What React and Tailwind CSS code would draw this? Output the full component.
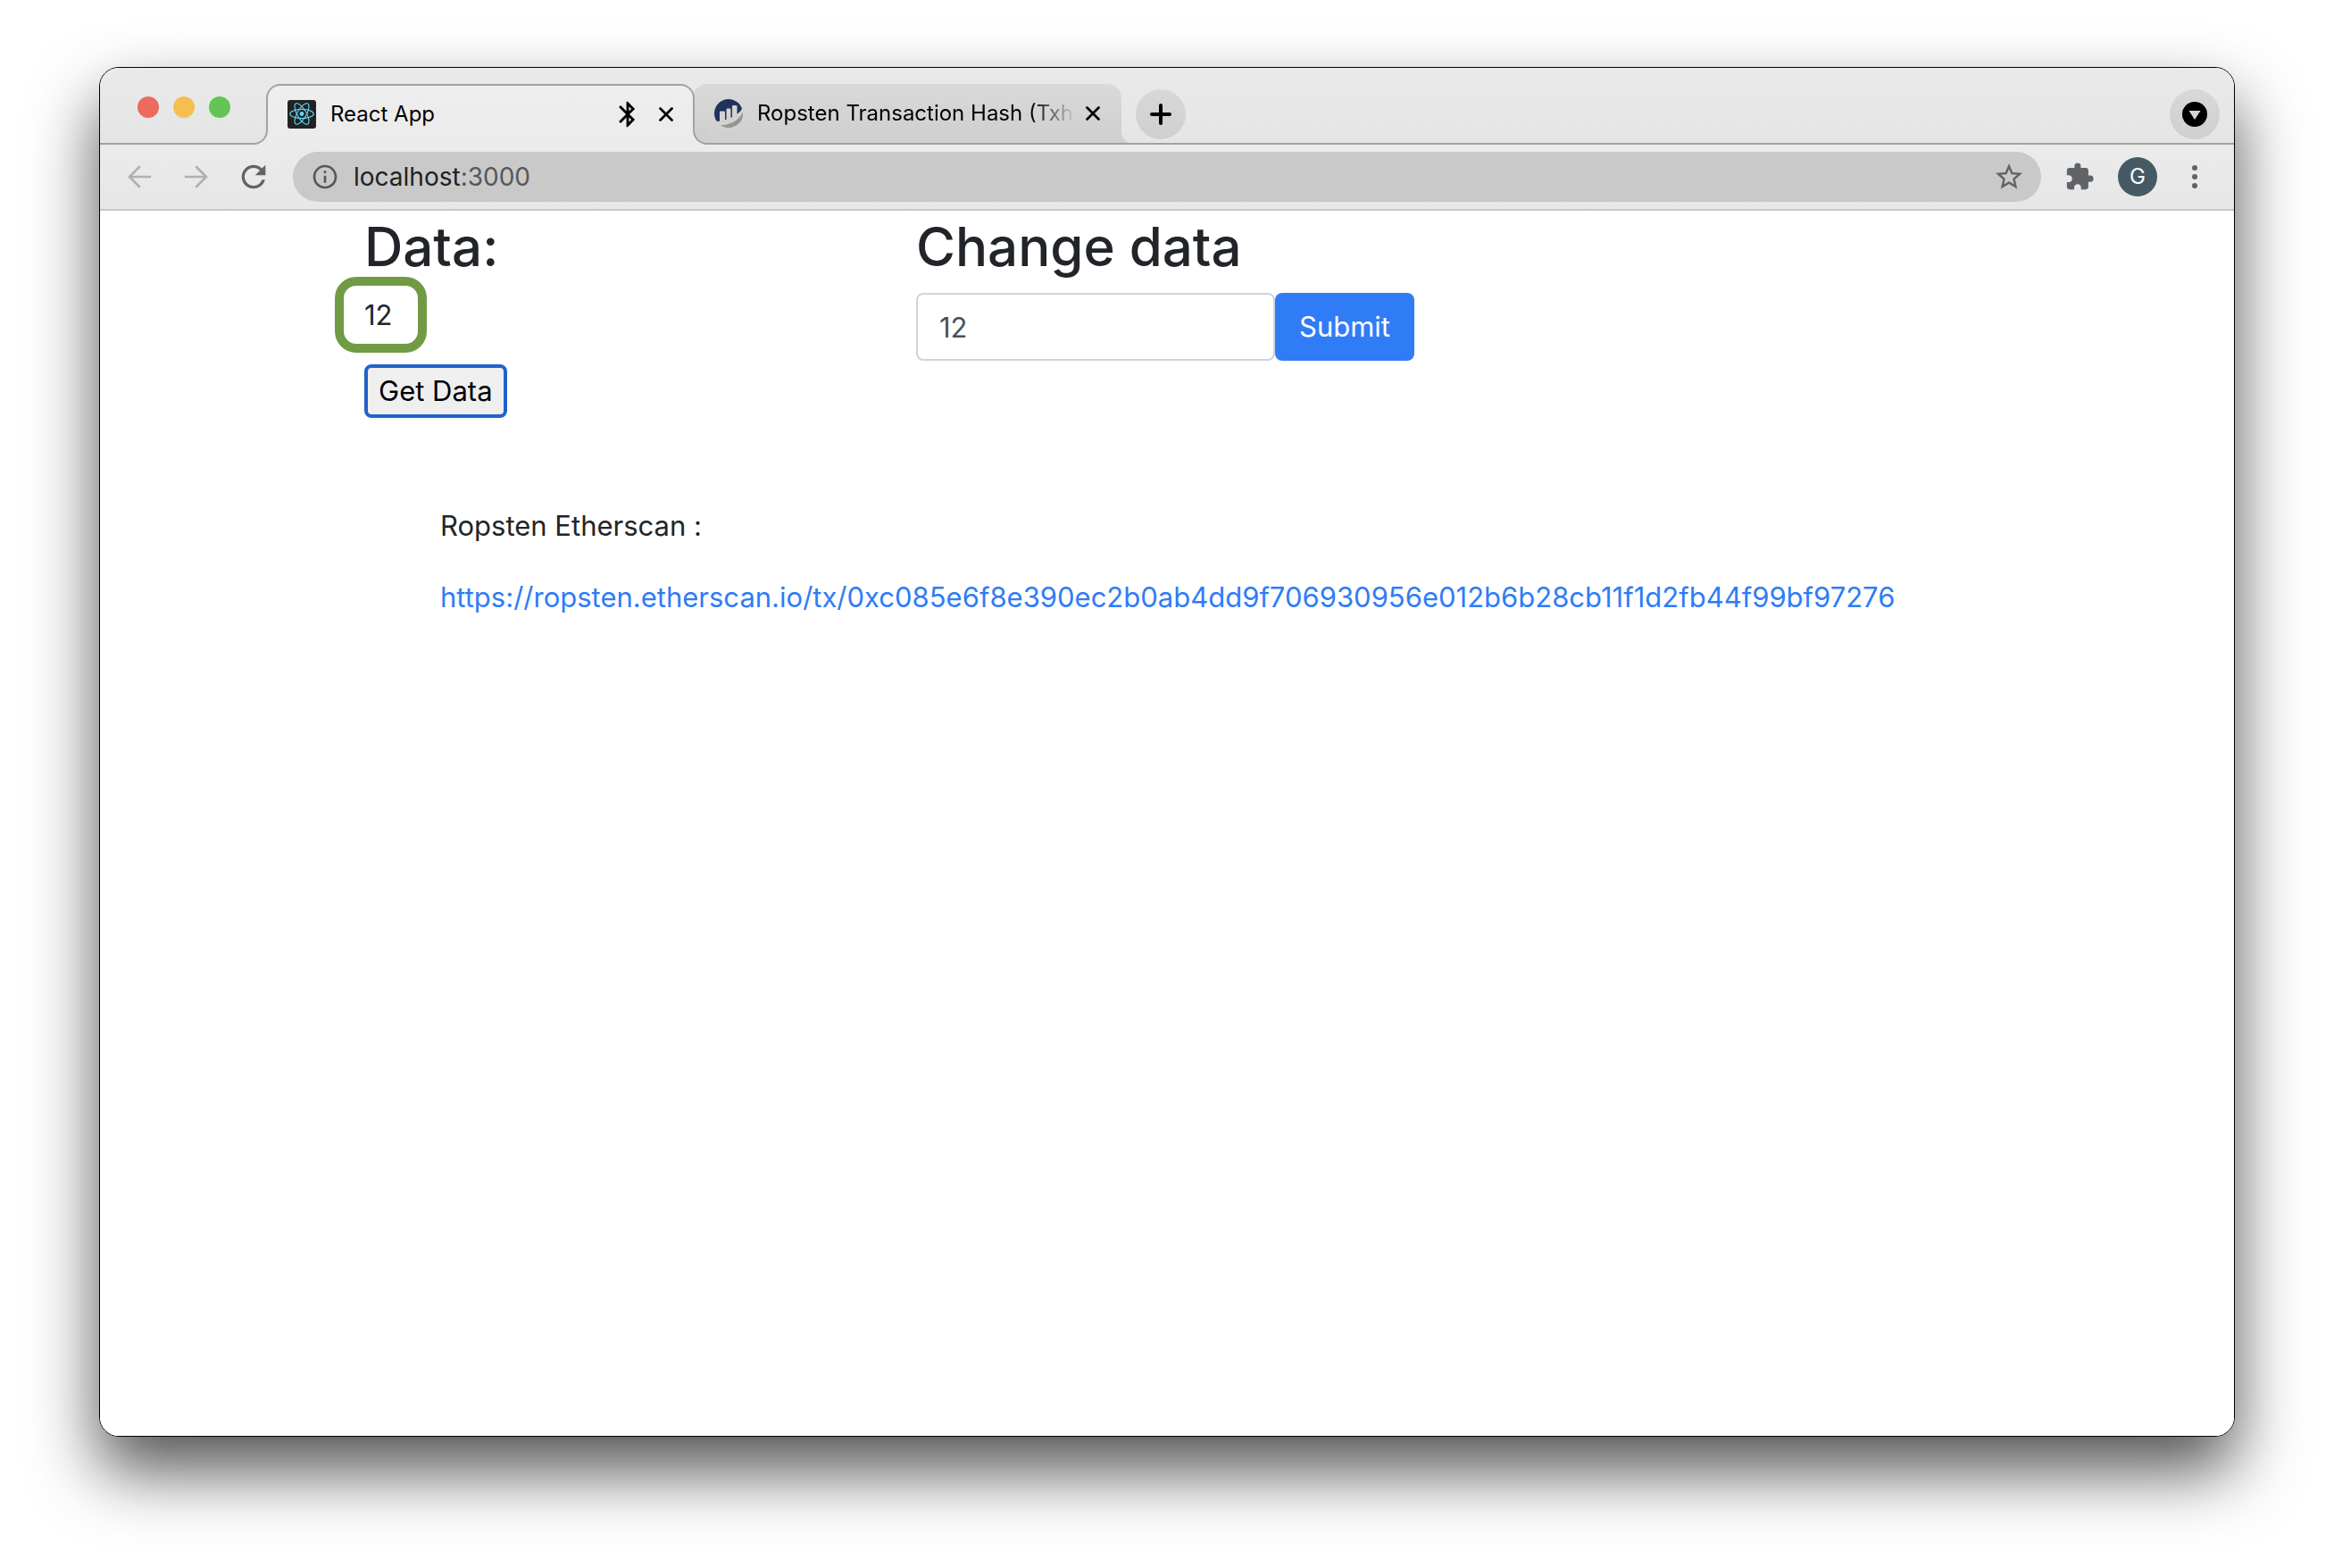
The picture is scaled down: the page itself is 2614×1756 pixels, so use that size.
import { MdInfoOutline, MdRefresh, MdStarBorder, MdExtension, MdBluetooth } from "react-icons/md";

const txUrl =
  "https://ropsten.etherscan.io/tx/0xc085e6f8e390ec2b0ab4dd9f706930956e012b6b28cb11f1d2fb44f99bf97276";

function ReactLogo() {
  return (
    <svg viewBox="0 0 32 32" className="size-8 shrink-0" aria-hidden="true">
      <rect width="32" height="32" rx="3" fill="#222" />
      <circle cx="16" cy="15.5" r="2.4" fill="#61dafb" />
      <g fill="none" stroke="#61dafb" strokeWidth="1.1">
        <ellipse cx="16" cy="15.5" rx="13.3" ry="5.1" />
        <ellipse cx="16" cy="15.5" rx="13.3" ry="5.1" transform="rotate(60 16 15.5)" />
        <ellipse cx="16" cy="15.5" rx="13.3" ry="5.1" transform="rotate(120 16 15.5)" />
      </g>
    </svg>
  );
}

function EtherscanLogo() {
  return (
    <svg viewBox="0 0 32 32" className="size-8 shrink-0" aria-hidden="true">
      <path
        d="M2.600 24.800A16 16 0 1 1 31 10.500C29.500 15.500 19 22.500 6 24.800z"
        fill="#21325b"
      />
      <path d="M32 14.500A16 16 0 0 1 7 29.200C18 29 28 23.500 32 14.500z" fill="#979695" />
      <g fill="#d3d3d3">
        <path d="M6 14.800q0-1.300 1.300-1.300h3.400q1.300 0 1.300 1.300V24l-6 1.500z" />
        <path d="M13.500 11.800q0-1.300 1.300-1.300h2.400q1.300 0 1.300 1.300v10l-5 2.200z" />
        <path d="M20 8.300Q20 7 21.300 7h2.900q1.300 0 1.300 1.300v9.700L20 21.500z" />
      </g>
    </svg>
  );
}

function CloseIcon() {
  return (
    <svg viewBox="0 0 16 16" className="size-4" aria-hidden="true">
      <path d="M1.500 1.500l13 13M14.500 1.500l-13 13" stroke="#000" strokeWidth="2.700" strokeLinecap="round" />
    </svg>
  );
}

function Arrow({ flip }) {
  return (
    <svg viewBox="0 0 28 28" className={flip ? "size-7 rotate-180" : "size-7"} aria-hidden="true">
      <path
        d="M26 14H3M14 3L3 14l11 11"
        fill="none"
        stroke="#aeb0b2"
        strokeWidth="2.700"
        strokeLinecap="round"
      />
    </svg>
  );
}

function TabStrip() {
  return (
    <div className="flex h-[86px] border-b-2 border-[#a2a2a2] bg-linear-to-b from-[#eaeaea] to-[#e5e5e5]">
      <div className="flex w-[186px] shrink-0 gap-4 pt-8 pl-[42px]">
        <span className="size-6 rounded-full bg-[#ed6a5e]" />
        <span className="size-6 rounded-full bg-[#f5bf4f]" />
        <span className="size-6 rounded-full bg-[#62c554]" />
      </div>

      <div className="relative z-10 -mb-[2px] flex h-[68px] w-[480px] shrink-0 items-center self-end rounded-t-2xl border-2 border-b-0 border-[#a2a2a2] bg-linear-to-b from-[#eeeeee] to-[#ebebeb] px-[22px] pb-[2px]">
        <span className="absolute bottom-0 -left-[18px] size-[18px] bg-[#ebebeb]">
          <span className="block size-full rounded-br-2xl border-r-2 border-b-2 border-[#a2a2a2] bg-[#e5e5e5]" />
        </span>
        <span className="absolute -right-[18px] bottom-0 size-[18px] bg-[#ebebeb]">
          <span className="block size-full rounded-bl-2xl border-b-2 border-l-2 border-[#a2a2a2] bg-[#cfcfcf]" />
        </span>
        <ReactLogo />
        <span className="ml-4 flex-1 text-[24px] leading-8 text-black">React App</span>
        <MdBluetooth className="size-[34px] text-black" />
        <button type="button" aria-label="Close React App" className="ml-[18px]">
          <CloseIcon />
        </button>
      </div>

      <div className="relative -ml-[2px] flex h-[66px] w-[480px] shrink-0 items-center self-end rounded-t-2xl bg-linear-to-b from-[#d9d9d9] to-[#cfcfcf] px-6">
        <span className="absolute -right-3 bottom-0 size-3 bg-[#cfcfcf]">
          <span className="block size-full rounded-bl-xl bg-[#e5e5e5]" />
        </span>
        <EtherscanLogo />
        <span className="ml-4 flex-1 text-[24px] leading-8 whitespace-nowrap text-black [mask-image:linear-gradient(to_right,#000_86%,transparent_100%)]">
          Ropsten Transaction Hash (Txh
        </span>
        <button type="button" aria-label="Close Ropsten Transaction Hash" className="ml-3">
          <CloseIcon />
        </button>
      </div>

      <button
        type="button"
        aria-label="New tab"
        className="mb-1 ml-4 flex size-14 shrink-0 items-center justify-center self-end rounded-full bg-linear-to-b from-[#d8d8d8] to-[#cfcfcf]"
      >
        <svg viewBox="0 0 24 24" className="size-6" aria-hidden="true">
          <path d="M12 2v20M2 12h20" stroke="#000" strokeWidth="4" strokeLinecap="round" />
        </svg>
      </button>

      <button
        type="button"
        aria-label="Search tabs"
        className="mr-4 mb-1 ml-auto flex size-14 shrink-0 items-center justify-center self-end rounded-full bg-linear-to-b from-[#d8d8d8] to-[#cfcfcf]"
      >
        <svg viewBox="0 0 28 28" className="size-7" aria-hidden="true">
          <circle cx="14" cy="14" r="14" fill="#000" />
          <path d="M7.500 10h13L14 20z" fill="#d4d4d4" />
        </svg>
      </button>
    </div>
  );
}

function Toolbar() {
  return (
    <div className="flex h-[74px] items-center border-b-2 border-[#c8c8c8] bg-linear-to-b from-[#ebebeb] to-[#e7e7e7] pr-7 pl-[30px]">
      <button type="button" aria-label="Back">
        <Arrow />
      </button>
      <button type="button" aria-label="Forward" className="ml-9">
        <Arrow flip />
      </button>
      <button type="button" aria-label="Reload" className="ml-[30px]">
        <MdRefresh className="size-10 text-[#606368]" />
      </button>

      <div className="ml-6 flex h-14 flex-1 items-center rounded-full bg-[#c9c9c9] pr-[18px] pl-5">
        <MdInfoOutline className="size-8 text-[#55575b]" />
        <div className="ml-4 flex-1 text-[28px] leading-9 text-[#202124]">
          localhost<span className="text-[#55575b]">:3000</span>
        </div>
        <button type="button" aria-label="Bookmark">
          <MdStarBorder className="size-9 text-[#606368]" />
        </button>
      </div>

      <button type="button" aria-label="Extensions" className="ml-[26px]">
        <MdExtension className="size-[34px] text-[#606368]" />
      </button>
      <button
        type="button"
        aria-label="Profile"
        className="ml-[26px] flex size-11 items-center justify-center rounded-full bg-[#465a65] text-2xl text-white"
      >
        G
      </button>
      <button type="button" aria-label="Menu" className="ml-[26px] flex w-8 flex-col items-center gap-1">
        <span className="size-[6px] rounded-full bg-[#606368]" />
        <span className="size-[6px] rounded-full bg-[#606368]" />
        <span className="size-[6px] rounded-full bg-[#606368]" />
      </button>
    </div>
  );
}

function Page() {
  return (
    <main className="flex-1 bg-white pl-[296px] text-[31px] leading-[50px] text-[#212529]">
      <div className="flex">
        <section className="w-[618px] shrink-0">
          <h1 className="text-[60px] leading-[80px] font-medium">Data:</h1>
          <div className="relative mt-3">
            12
            <span className="absolute -top-[18px] -left-[33px] h-[85px] w-[103px] rounded-3xl border-10 border-[#719a45]" />
          </div>
          <button
            type="button"
            className="mt-[30px] h-[60px] rounded-lg border-4 border-[#2262c9] bg-[#efefef] px-3 leading-[52px] text-black"
          >
            Get Data
          </button>
        </section>
        <section>
          <h1 className="text-[60px] leading-[80px] font-medium">
            <label htmlFor="value">Change data</label>
          </h1>
          <form className="mt-3 flex" onSubmit={(e) => e.preventDefault()}>
            <input
              id="value"
              type="text"
              defaultValue="12"
              className="h-[76px] w-[402px] rounded-lg border-2 border-[#ced4da] px-6 text-[#495057]"
            />
            <button type="submit" className="h-[76px] rounded-lg bg-[#307cf6] px-[27px] text-white">
              Submit
            </button>
          </form>
        </section>
      </div>
      <div className="mt-24 pl-[85px]">
        <p>Ropsten Etherscan :</p>
        <p className="mt-[30px]">
          <a href={txUrl} className="text-[#307cf6]">
            {txUrl}
          </a>
        </p>
      </div>
    </main>
  );
}

export default function App() {
  return (
    <div className="flex min-h-screen flex-col bg-white px-[111px] pt-[75px] pb-[147px] font-['Inter',sans-serif]">
      <div className="flex flex-1 flex-col overflow-hidden rounded-[22px] border border-black shadow-[0_38px_76px_rgba(0,0,0,0.68)]">
        <TabStrip />
        <Toolbar />
        <Page />
      </div>
    </div>
  );
}
